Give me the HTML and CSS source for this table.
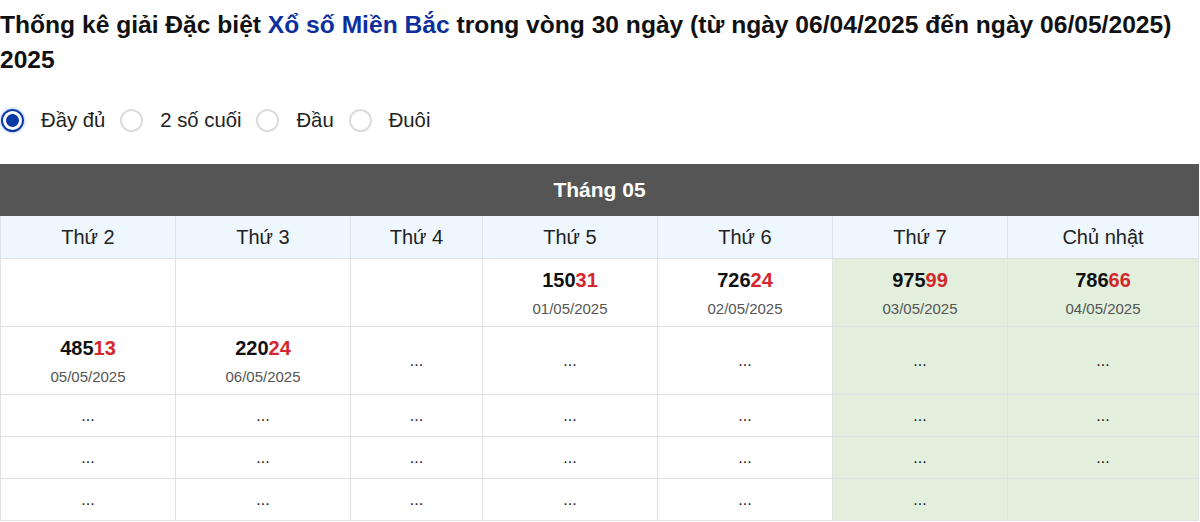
FILE: index.html
```html
<!DOCTYPE html>
<html lang="vi">
<head>
<meta charset="utf-8">
<title>Thống kê giải Đặc biệt</title>
<link rel="stylesheet" href="styles.css">
</head>
<body>
<h1 class="title">Thống kê giải Đặc biệt <span class="hl">Xổ số Miền Bắc</span> trong vòng 30 ngày (từ ngày 06/04/2025 đến ngày 06/05/2025) 2025</h1>
<div class="opts">
  <label class="opt"><span class="radio checked"></span><span class="lbl">Đầy đủ</span></label>
  <label class="opt"><span class="radio"></span><span class="lbl">2 số cuối</span></label>
  <label class="opt"><span class="radio"></span><span class="lbl">Đầu</span></label>
  <label class="opt"><span class="radio"></span><span class="lbl">Đuôi</span></label>
</div>
<table class="cal">
  <colgroup>
    <col class="c175"><col class="c175"><col class="c132"><col class="c175"><col class="c175"><col class="c175"><col>
  </colgroup>
  <thead>
    <tr><th colspan="7" class="month">Tháng 05</th></tr>
    <tr class="days"><th>Thứ 2</th><th>Thứ 3</th><th>Thứ 4</th><th>Thứ 5</th><th>Thứ 6</th><th>Thứ 7</th><th>Chủ nhật</th></tr>
  </thead>
  <tbody>
    <tr class="tall">
      <td></td><td></td><td></td>
      <td><div class="num">150<em>31</em></div><div class="date">01/05/2025</div></td>
      <td><div class="num">726<em>24</em></div><div class="date">02/05/2025</div></td>
      <td class="we"><div class="num">975<em>99</em></div><div class="date">03/05/2025</div></td>
      <td class="we"><div class="num">786<em>66</em></div><div class="date">04/05/2025</div></td>
    </tr>
    <tr class="tall">
      <td><div class="num">485<em>13</em></div><div class="date">05/05/2025</div></td>
      <td><div class="num">220<em>24</em></div><div class="date">06/05/2025</div></td>
      <td>...</td><td>...</td><td>...</td><td class="we">...</td><td class="we">...</td>
    </tr>
    <tr><td>...</td><td>...</td><td>...</td><td>...</td><td>...</td><td class="we">...</td><td class="we">...</td></tr>
    <tr><td>...</td><td>...</td><td>...</td><td>...</td><td>...</td><td class="we">...</td><td class="we">...</td></tr>
    <tr><td>...</td><td>...</td><td>...</td><td>...</td><td>...</td><td class="we">...</td><td class="we"></td></tr>
  </tbody>
</table>
</body>
</html>
```

FILE: styles.css
```css
html, body {
  margin: 0;
  padding: 0;
  background: #fff;
  font-family: "Liberation Sans", Arial, sans-serif;
  color: #111;
}
.title {
  margin: 0;
  padding-top: 7px;
  font-size: 24.6px;
  line-height: 35px;
  font-weight: bold;
  color: #111;
}
.hl {
  color: #0d2f9e;
}
.opts {
  display: flex;
  align-items: center;
  margin-top: 31px;
  height: 24px;
}
.opt {
  display: flex;
  align-items: center;
  margin-right: 14px;
}
.radio {
  box-sizing: border-box;
  width: 23px;
  height: 23px;
  margin-left: 1px;
  border: 2px solid #dcdcdc;
  border-radius: 50%;
  background: #fff;
}
.radio.checked {
  border: 2px solid #0b3aa6;
  background: radial-gradient(circle, #0b3aa6 0 6px, #fff 6.8px);
  box-shadow: 0 0 3px 1px rgba(60, 110, 220, 0.35);
}
.lbl {
  margin-left: 17px;
  font-family: "Liberation Sans", Arial, sans-serif;
  font-size: 20.3px;
  color: #222;
}
.cal {
  margin-top: 32px;
  width: 1199px;
  border-collapse: collapse;
  table-layout: fixed;
  text-align: center;
}
.c175 { width: 175px; }
.c132 { width: 132px; }
.cal th, .cal td {
  border: 1px solid #dfe3e6;
  padding: 0;
}
.month {
  background: #555;
  color: #fff;
  font-size: 21px;
  font-weight: bold;
  height: 50px;
  border-color: #555 !important;
}
.days th {
  background: #eef6fe;
  font-weight: normal;
  font-size: 20px;
  color: #222;
  height: 42px;
}
.cal td {
  height: 41px;
  font-size: 16px;
  color: #222;
}
.cal tr.tall td {
  height: 67px;
}
.cal td.we {
  background: #e1efdc;
}
.num {
  font-size: 20px;
  font-weight: bold;
  line-height: 24px;
  color: #111;
}
.num em {
  font-style: normal;
  color: #d4272d;
}
.date {
  margin-top: 8px;
  font-size: 15px;
  line-height: 18px;
  color: #555;
}
```
